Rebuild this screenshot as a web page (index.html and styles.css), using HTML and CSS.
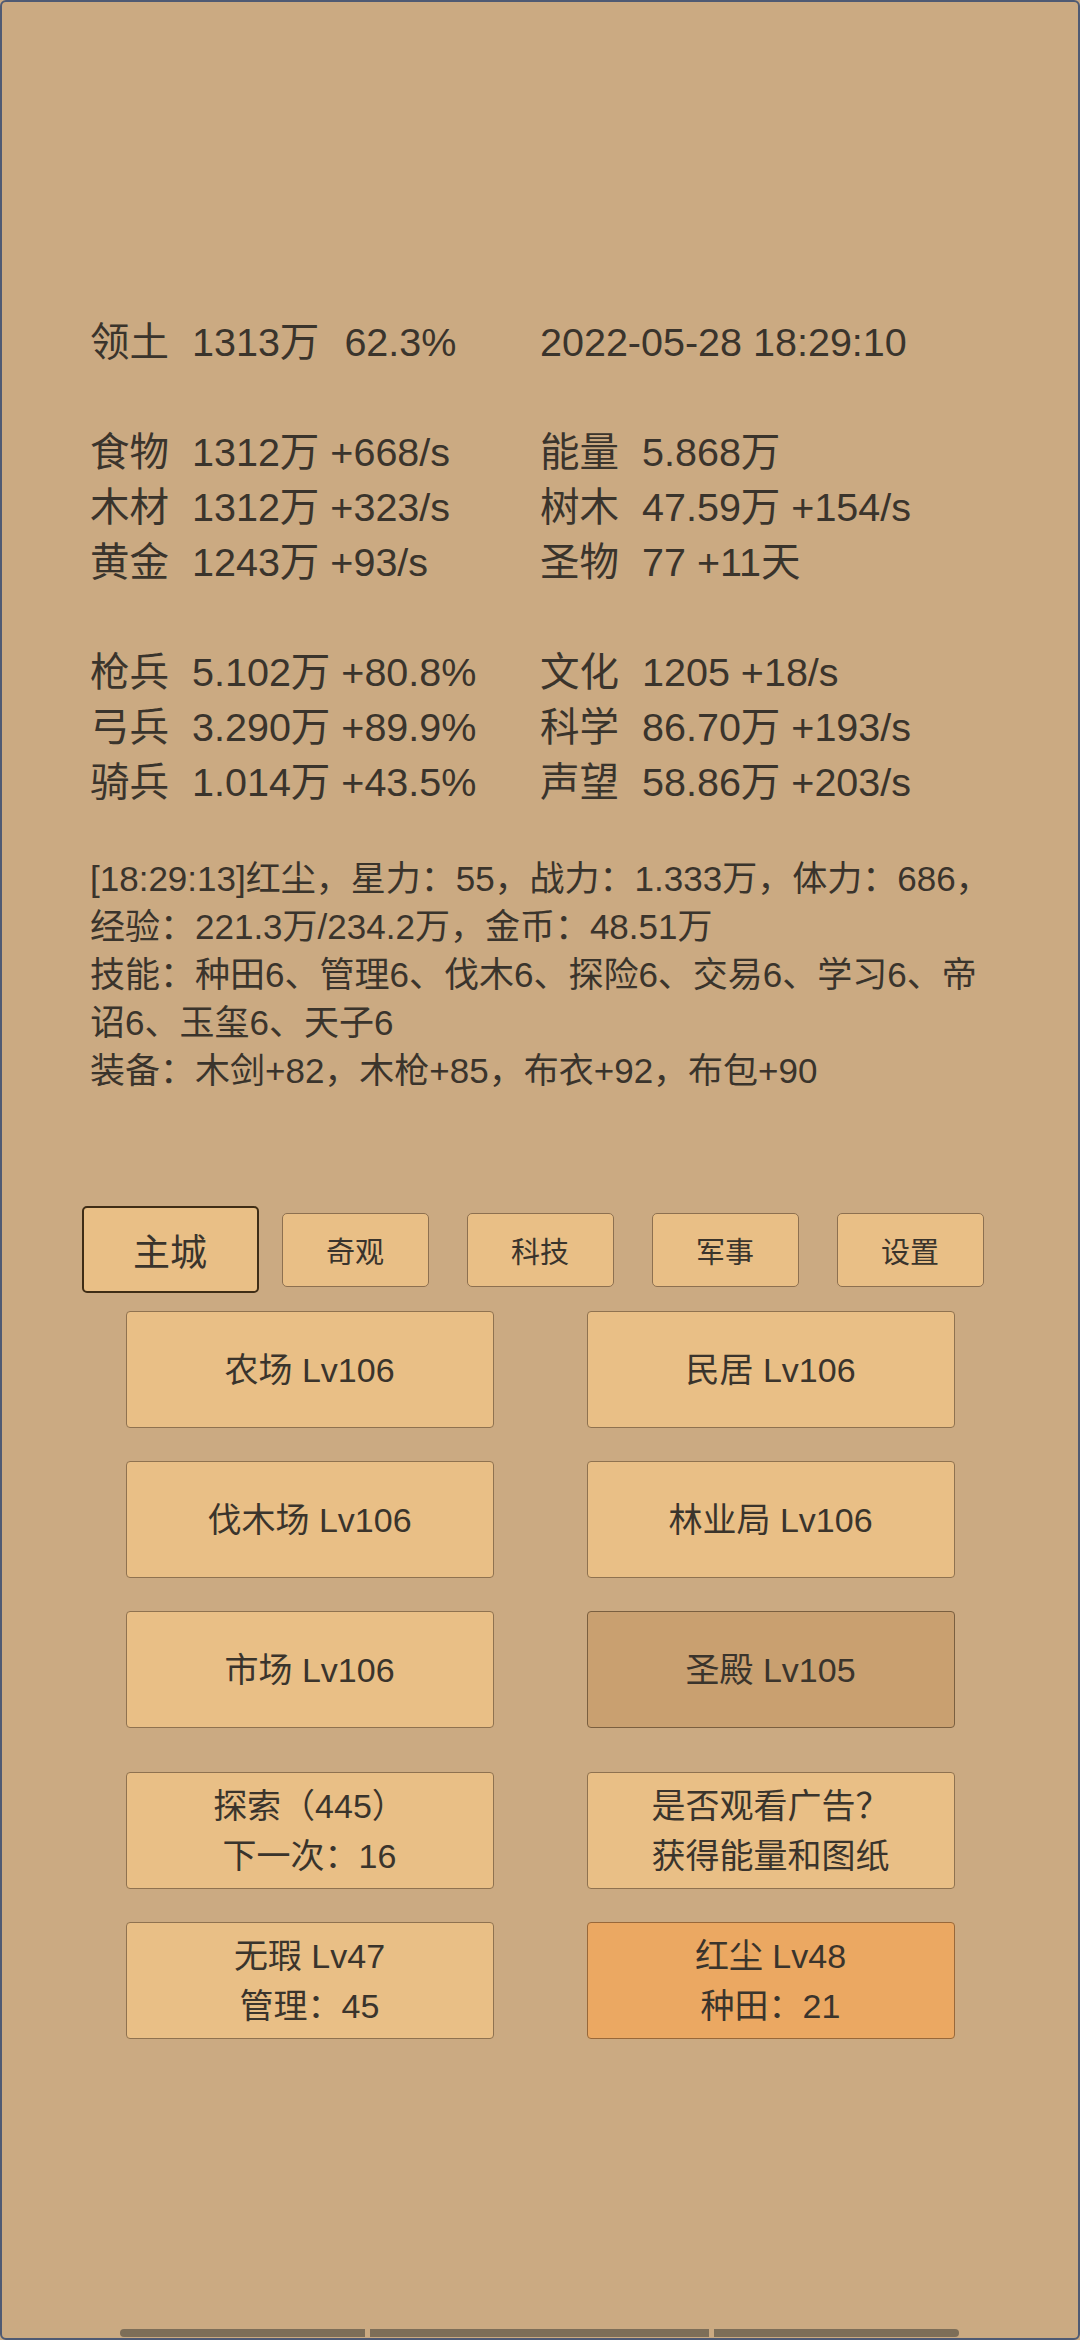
FILE: index.html
```html
<!DOCTYPE html>
<html>
<head>
    <meta charset="utf-8">
    <meta name="viewport" content="width=device-width, initial-scale=1">
    <title>领土</title>
    <link rel="stylesheet" href="styles.css">
</head>

<body>
    <div class="screen">

        <section class="stats">
            <div class="row">
                <div class="cell"><span class="label">领土</span><span>1313万</span><span class="pct">62.3%</span></div>
                <div class="cell">2022-05-28 18:29:10</div>
            </div>
            <div class="row blank"></div>
            <div class="row">
                <div class="cell"><span class="label">食物</span>1312万 +668/s</div>
                <div class="cell"><span class="label">能量</span>5.868万</div>
            </div>
            <div class="row">
                <div class="cell"><span class="label">木材</span>1312万 +323/s</div>
                <div class="cell"><span class="label">树木</span>47.59万 +154/s</div>
            </div>
            <div class="row">
                <div class="cell"><span class="label">黄金</span>1243万 +93/s</div>
                <div class="cell"><span class="label">圣物</span>77 +11天</div>
            </div>
            <div class="row blank"></div>
            <div class="row">
                <div class="cell"><span class="label">枪兵</span>5.102万 +80.8%</div>
                <div class="cell"><span class="label">文化</span>1205 +18/s</div>
            </div>
            <div class="row">
                <div class="cell"><span class="label">弓兵</span>3.290万 +89.9%</div>
                <div class="cell"><span class="label">科学</span>86.70万 +193/s</div>
            </div>
            <div class="row">
                <div class="cell"><span class="label">骑兵</span>1.014万 +43.5%</div>
                <div class="cell"><span class="label">声望</span>58.86万 +203/s</div>
            </div>
        </section>

        <!-- 角色日志 -->
        <section class="log">
            <p>[18:29:13]红尘，星力：55，战力：1.333万，体力：686，</p>
            <p>经验：221.3万/234.2万，金币：48.51万</p>
            <p>技能：种田6、管理6、伐木6、探险6、交易6、学习6、帝<br>诏6、玉玺6、天子6</p>
            <p>装备：木剑+82，木枪+85，布衣+92，布包+90</p>
        </section>

        <nav class="tabs">
            <button class="tab active">主城</button>
            <button class="tab">奇观</button>
            <button class="tab">科技</button>
            <button class="tab">军事</button>
            <button class="tab">设置</button>
        </nav>

        <section class="grid buildings">
            <button class="btn">农场 Lv106</button>
            <button class="btn">民居 Lv106</button>
            <button class="btn">伐木场 Lv106</button>
            <button class="btn">林业局 Lv106</button>
            <button class="btn">市场 Lv106</button>
            <button class="btn dim">圣殿 Lv105</button>
        </section>

        <section class="grid actions">
            <button class="btn">探索（445）<br>下一次：16</button>
            <button class="btn">是否观看广告？<br>获得能量和图纸</button>
            <button class="btn">无瑕 Lv47<br>管理：45</button>
            <button class="btn hot">红尘 Lv48<br>种田：21</button>
        </section>

        <div class="scrollbar">
            <span class="seg a"></span>
            <span class="seg b"></span>
            <span class="seg c"></span>
        </div>
    </div>
</body>
</html>
```

FILE: styles.css
```css
body{
    margin: 0;
    padding: 0;
    background-color: #cbaa82;
    font-family: "Liberation Sans", "Noto Sans CJK SC", sans-serif;
    color: #3a342c;}

.screen{
    width: 1080px;
    height: 2340px;
    box-sizing: border-box;
    border: 2px solid #4f5a73;
    border-radius: 6px;
    display: flex;
    flex-direction: column;
    overflow: hidden;}

.stats{
    margin: 313px 0 0 88px;
    font-size: 39.5px;
    line-height: 55px;}

.row{
    display: flex;
    height: 55px;
    white-space: nowrap;}

.cell{
    width: 450px;}

.label{
    display: inline-block;
    width: 102px;}

.pct{
    margin-left: 25px;}

.log{
    margin: 45px 0 0 88px;
    font-size: 35px;
    line-height: 48px;}

.log p{
    margin: 0;
    white-space: nowrap;}

.tabs{
    margin-top: 111px;
    display: grid;
    grid-template-columns: repeat(5, 185px);
    justify-content: center;
    justify-items: center;
    align-items: center;
    height: 87px;}

.tab{
    width: 147px;
    height: 74px;
    background-color: #e9bf86;
    border: 1px solid #8d7050;
    border-radius: 5px;
    font-family: inherit;
    font-size: 29px;
    color: #3a342c;
    padding: 0;}

.tab.active{
    width: 177px;
    height: 87px;
    font-size: 37px;
    border: 2px solid #3f2d16;}

.grid{
    display: grid;
    grid-template-columns: 368px 368px;
    column-gap: 93px;
    row-gap: 33px;
    justify-content: center;}

.buildings{
    margin-top: 18px;}

.actions{
    margin-top: 44px;}

.btn{
    height: 117px;
    background-color: #e9bf86;
    border: 1px solid #8f7250;
    border-radius: 4px;
    font-family: inherit;
    font-size: 34px;
    line-height: 50px;
    color: #3a342c;
    padding: 0;}

.btn.dim{
    background-color: #c9a070;
    border-color: #7a5f40;}

.btn.hot{
    background-color: #eba862;
    border-color: #98683a;}

.scrollbar{
    margin: auto 0 1px 118px;
    width: 839px;
    height: 8px;
    display: flex;
    gap: 5px;
    border-radius: 4px;
    overflow: hidden;}

.seg{
    background-color: #7d6e58;}

.seg.a{ width: 245px;}
.seg.b{ width: 339px;}
.seg.c{ width: 245px;}
```
